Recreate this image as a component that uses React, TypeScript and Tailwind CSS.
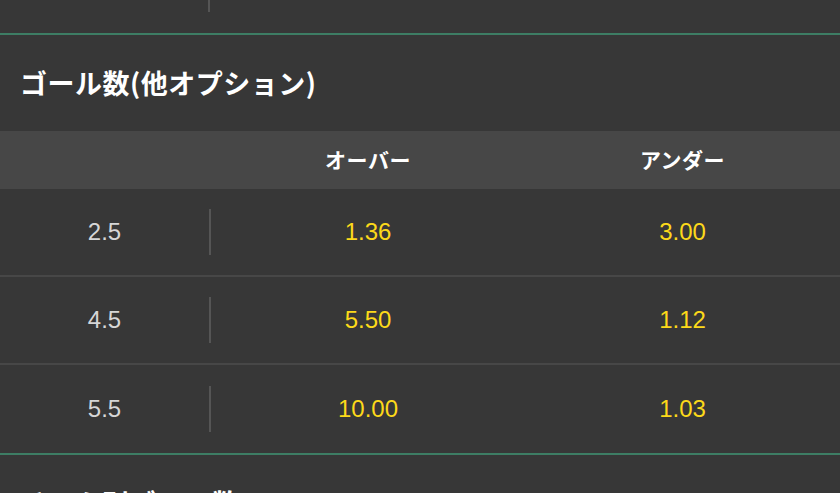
const rows = [
    { line: '2.5', over: '1.36', under: '3.00' },
    { line: '4.5', over: '5.50', under: '1.12' },
    { line: '5.5', over: '10.00', under: '1.03' },
];

const jp = "font-['Noto_Sans_CJK_JP','Noto_Sans',sans-serif]";
const num = "font-['Liberation_Sans',Arial,sans-serif]";

function OddsRow({
    line,
    over,
    under,
    last,
}: {
    line: string;
    over: string;
    under: string;
    last?: boolean;
}) {
    return (
        <div
            className={`flex h-[88px] items-center ${
                last ? '' : 'border-b-2 border-[#474747]'
            }`}
        >
            <div className="flex w-[209px] items-center justify-center h-full">
                <span className={`${num} text-[24px] text-[#d6d6d6]`}>{line}</span>
            </div>
            <div className="w-[2px] h-[46px] bg-[#555555]" />
            <div className="flex flex-1 items-center justify-center">
                <span className={`${num} text-[24px] text-[#fcd91a]`}>{over}</span>
            </div>
            <div className="flex w-[315px] items-center justify-center">
                <span className={`${num} text-[24px] text-[#fcd91a]`}>{under}</span>
            </div>
        </div>
    );
}

export default function App() {
    return (
        <div className="w-[840px] h-[493px] overflow-hidden bg-[#373737]">
            {/* tail of the previous market */}
            <div className="h-[33px] flex">
                <div className="w-[208px]" />
                <div className="w-[2px] h-[12px] bg-[#555555]" />
            </div>
            <div className="h-[2px] bg-[#3d7d64]" />

            <div className="h-[96px] flex items-center px-5">
                <h2 className={`${jp} text-[27px] font-bold text-white tracking-[0.5px]`}>
                    ゴール数(他オプション)
                </h2>
            </div>

            <div className="h-[58px] flex items-center bg-[#474747]">
                <div className="w-[209px]" />
                <div className="w-[2px]" />
                <div className={`${jp} flex-1 text-center text-[21px] font-bold text-white tracking-[0.5px]`}>
                    オーバー
                </div>
                <div className={`${jp} w-[315px] text-center text-[21px] font-bold text-white tracking-[0.5px]`}>
                    アンダー
                </div>
            </div>

            {rows.map((r, i) => (
                <OddsRow key={r.line} {...r} last={i === rows.length - 1} />
            ))}

            <div className="h-[2px] bg-[#3d7d64]" />
            <div className="h-[96px] flex items-center px-5">
                <h2 className={`${jp} text-[27px] font-bold text-white tracking-[0.5px]`}>
                    チーム別ゴール数
                </h2>
            </div>
        </div>
    );
}
